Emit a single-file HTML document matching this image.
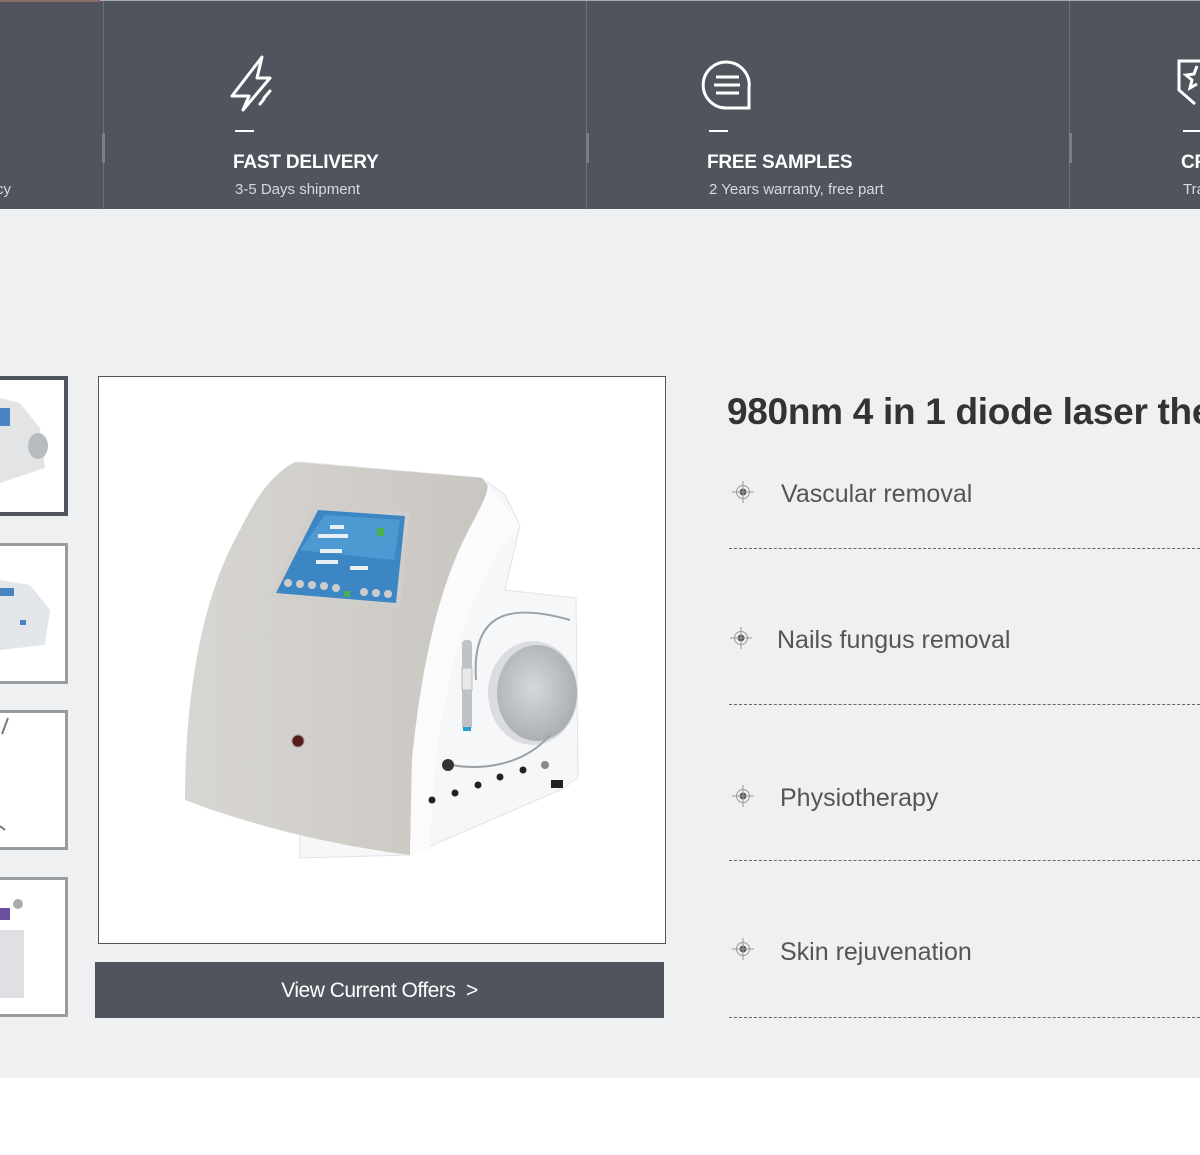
<!DOCTYPE html>
<html><head><meta charset="utf-8"><style>
*{margin:0;padding:0;box-sizing:border-box}
html,body{width:1200px;height:1155px;overflow:hidden}
body{position:relative;background:#fff;font-family:"Liberation Sans",sans-serif}
#wrap{position:absolute;left:0;top:0;width:1200px;height:1155px;overflow:hidden}
.abs{position:absolute}
.top{left:0;top:0;width:1200px;height:209px;background:#4f545d;border-top:1px solid #a9acb2}
.vl{top:1px;width:1px;height:208px;background:#6b7078}
.vs{top:133px;width:3px;height:30px;background:#7a7e85}
.dash{left:0;width:40px;top:130px;height:2px;background:#fff}
.h{color:#fff;font-size:19px;font-weight:bold;top:152px;letter-spacing:-0.2px}
.s{color:#d8dadd;font-size:15px;top:181px}
.main{left:0;top:209px;width:1200px;height:869px;background:#eff0f2}
.thumb{left:-10px;width:78px;height:140px;background:#fff;border:3px solid #999c9f;overflow:hidden}
.item{left:729px;width:471px;border-bottom:1px dashed #666}
.item span{position:absolute;font-size:25px;color:#555;white-space:nowrap}
</style></head><body><div id="wrap">
<div class="abs top"></div>
<div class="abs" style="left:0;top:0;width:100px;height:2px;background:#8a6a66"></div>
<div class="abs vl" style="left:103px"></div><div class="abs vs" style="left:102px"></div>
<div class="abs vl" style="left:586px"></div><div class="abs vs" style="left:586px"></div>
<div class="abs vl" style="left:1069px"></div><div class="abs vs" style="left:1069px"></div>
<div class="abs s" style="left:-4px">cy</div>

<svg class="abs" style="left:226px;top:52px" width="52" height="64" viewBox="0 0 52 64" fill="none" stroke="#fff" stroke-width="3" stroke-linecap="round" stroke-linejoin="round">
<path d="M36 5 L6 44 L23 44 L17 58 L44 26 L31 26 L36 5 Z"/><path d="M38 46 L44 39"/><path d="M34 52 L38 47"/></svg>
<div class="abs dash" style="left:235px;width:19px"></div>
<div class="abs h" style="left:233px">FAST DELIVERY</div>
<div class="abs s" style="left:235px">3-5 Days shipment</div>

<svg class="abs" style="left:700px;top:58px" width="56" height="56" viewBox="0 0 56 56" fill="none" stroke="#fff" stroke-width="3">
<path d="M49 50 L49 30 A23 23 0 1 0 27 50 Z"/><path d="M16 19 H39 M14 27 H40 M16 35 H39"/></svg>
<div class="abs dash" style="left:709px;width:19px"></div>
<div class="abs h" style="left:707px">FREE SAMPLES</div>
<div class="abs s" style="left:709px">2 Years warranty, free part</div>

<svg class="abs" style="left:1175px;top:58px" width="25" height="50" viewBox="0 0 25 50" fill="none" stroke="#fff" stroke-width="3">
<path d="M25 3 H4 V32 L20 46"/><path d="M22 8 L19 16 L11 17 L17 22 L15 30 L22 26"/></svg>
<div class="abs dash" style="left:1183px;width:17px"></div>
<div class="abs h" style="left:1181px">CR</div>
<div class="abs s" style="left:1183px">Tra</div>

<div class="abs main"></div>

<div class="abs thumb" style="top:376px;height:140px;border:4px solid #4f545d"></div>
<svg class="abs" style="left:0;top:388px" width="60" height="110"><path d="M0 10 L20 15 L40 40 L45 80 L0 95 Z" fill="#e3e4e6"/><rect x="0" y="20" width="10" height="18" fill="#4a84c4"/><ellipse cx="38" cy="58" rx="10" ry="13" fill="#b8bcc0"/></svg>
<div class="abs thumb" style="top:543px;height:141px"></div>
<svg class="abs" style="left:0;top:560px" width="60" height="110"><path d="M0 20 L30 25 L50 50 L45 85 L0 90 Z" fill="#e3e6ea"/><rect x="0" y="28" width="14" height="8" fill="#4a84c4"/><rect x="20" y="60" width="6" height="5" fill="#4a84c4"/></svg>
<div class="abs thumb" style="top:710px;height:140px"></div>
<svg class="abs" style="left:0;top:716px" width="20" height="120" stroke="#777" stroke-width="2"><path d="M8 2 L2 18"/><path d="M0 110 L5 114"/></svg>
<div class="abs thumb" style="top:877px;height:140px"></div>
<svg class="abs" style="left:0;top:890px" width="30" height="120"><rect x="0" y="40" width="24" height="68" fill="#dfe0e4"/><rect x="0" y="18" width="10" height="12" fill="#6a4fa0"/><circle cx="18" cy="14" r="5" fill="#aaa"/></svg>

<div class="abs" style="left:98px;top:376px;width:568px;height:568px;background:#fff;border:1px solid #555"></div>
<svg class="abs" style="left:99px;top:377px" width="566" height="566" viewBox="99 377 566 566">
<defs>
<linearGradient id="g" x1="0" x2="1"><stop offset="0" stop-color="#d8d6d2"/><stop offset="1" stop-color="#c9c6c1"/></linearGradient>
<radialGradient id="d" cx="0.45" cy="0.45" r="0.6"><stop offset="0" stop-color="#d6d8da"/><stop offset="1" stop-color="#a8acb0"/></radialGradient>
</defs>
<path d="M300 462 L482 478 L505 495 L520 525 L505 590 L576 598 L578 778 L560 790 L410 855 L300 858 Z" fill="#f6f7f8" stroke="#e2e3e5"/>
<path d="M185 800 C185 700 200 600 240 530 C255 500 270 475 295 462 L482 478 C500 485 470 520 455 560 C430 620 418 700 412 760 L410 855 C330 845 250 825 185 800 Z" fill="url(#g)"/>
<path d="M482 478 C500 485 470 520 455 560 C430 620 418 700 412 760 L410 855 L430 850 C432 760 445 680 470 610 C485 570 505 540 520 525 Z" fill="#fbfbfc"/>
<path d="M313 505 L410 512 L400 608 L270 597 Z" fill="#d0cecb"/>
<path d="M318 510 L405 516 L396 603 L276 593 Z" fill="#3d86c4"/>
<path d="M325 515 L400 520 L394 560 L300 550 Z" fill="#5aa7dc" opacity="0.6"/>
<g fill="#e6eef6"><rect x="330" y="525" width="14" height="4"/><rect x="318" y="534" width="30" height="4"/><rect x="320" y="549" width="22" height="4"/><rect x="316" y="560" width="22" height="4"/><rect x="350" y="566" width="18" height="4"/></g>
<g fill="#ccc"><circle cx="288" cy="583" r="4"/><circle cx="300" cy="584" r="4"/><circle cx="312" cy="585" r="4"/><circle cx="324" cy="586" r="4"/><circle cx="336" cy="588" r="4"/><circle cx="364" cy="592" r="4"/><circle cx="376" cy="593" r="4"/><circle cx="388" cy="594" r="4"/></g>
<rect x="377" y="528" width="7" height="8" fill="#4bb04b"/><rect x="344" y="591" width="6" height="6" fill="#4bb04b"/>
<circle cx="298" cy="741" r="6" fill="#5a1a1a" stroke="#999"/>
<ellipse cx="533" cy="693" rx="45" ry="52" fill="#dadcdf"/>
<ellipse cx="537" cy="693" rx="40" ry="48" fill="url(#d)"/>
<path d="M476 680 C472 620 500 600 570 620" fill="none" stroke="#9aa0a6" stroke-width="2"/>
<rect x="462" y="640" width="10" height="90" rx="4" fill="#c0c3c6"/>
<rect x="462" y="668" width="10" height="22" fill="#e8e8e8" stroke="#bbb"/>
<rect x="463" y="727" width="8" height="4" fill="#2a9fd0"/>
<path d="M448 764 C470 770 520 770 550 735" fill="none" stroke="#9aa0a6" stroke-width="2"/>
<circle cx="448" cy="765" r="6" fill="#333"/>
<g fill="#222"><circle cx="432" cy="800" r="3.5"/><circle cx="455" cy="793" r="3.5"/><circle cx="478" cy="785" r="3.5"/><circle cx="500" cy="777" r="3.5"/><circle cx="523" cy="770" r="3.5"/></g>
<circle cx="545" cy="765" r="4" fill="#888"/><rect x="551" y="780" width="12" height="8" fill="#222"/>
</svg>

<div class="abs" style="left:95px;top:962px;width:569px;height:56px;background:#4f545d;color:#fff;font-size:21px;text-align:center;line-height:58px;letter-spacing:-0.5px">View Current Offers&nbsp;&nbsp;&gt;</div>

<div class="abs" style="left:727px;top:391px;width:473px;overflow:hidden;font-size:37px;font-weight:bold;color:#333;white-space:nowrap;letter-spacing:-0.3px">980nm 4 in 1 diode laser therapy</div>

<svg width="0" height="0" style="position:absolute"><defs><g id="ic"><circle cx="11" cy="11" r="6.5" fill="none" stroke="#999" stroke-width="1"/><circle cx="11" cy="11" r="3.5" fill="#555"/><path d="M0 11 H22 M11 0 V22" stroke="#999" stroke-width="1"/></g></defs></svg>

<div class="abs item" style="top:470px;height:79px"><svg class="abs" style="left:3px;top:11px" width="22" height="22"><use href="#ic"/></svg><span style="left:52px;top:10px">Vascular removal</span></div>
<div class="abs item" style="top:616px;height:89px"><svg class="abs" style="left:1px;top:11px" width="22" height="22"><use href="#ic"/></svg><span style="left:48px;top:10px">Nails fungus removal</span></div>
<div class="abs item" style="top:773px;height:88px"><svg class="abs" style="left:3px;top:12px" width="22" height="22"><use href="#ic"/></svg><span style="left:51px;top:11px">Physiotherapy</span></div>
<div class="abs item" style="top:927px;height:91px"><svg class="abs" style="left:3px;top:11px" width="22" height="22"><use href="#ic"/></svg><span style="left:51px;top:11px">Skin rejuvenation</span></div>
</div></body></html>
